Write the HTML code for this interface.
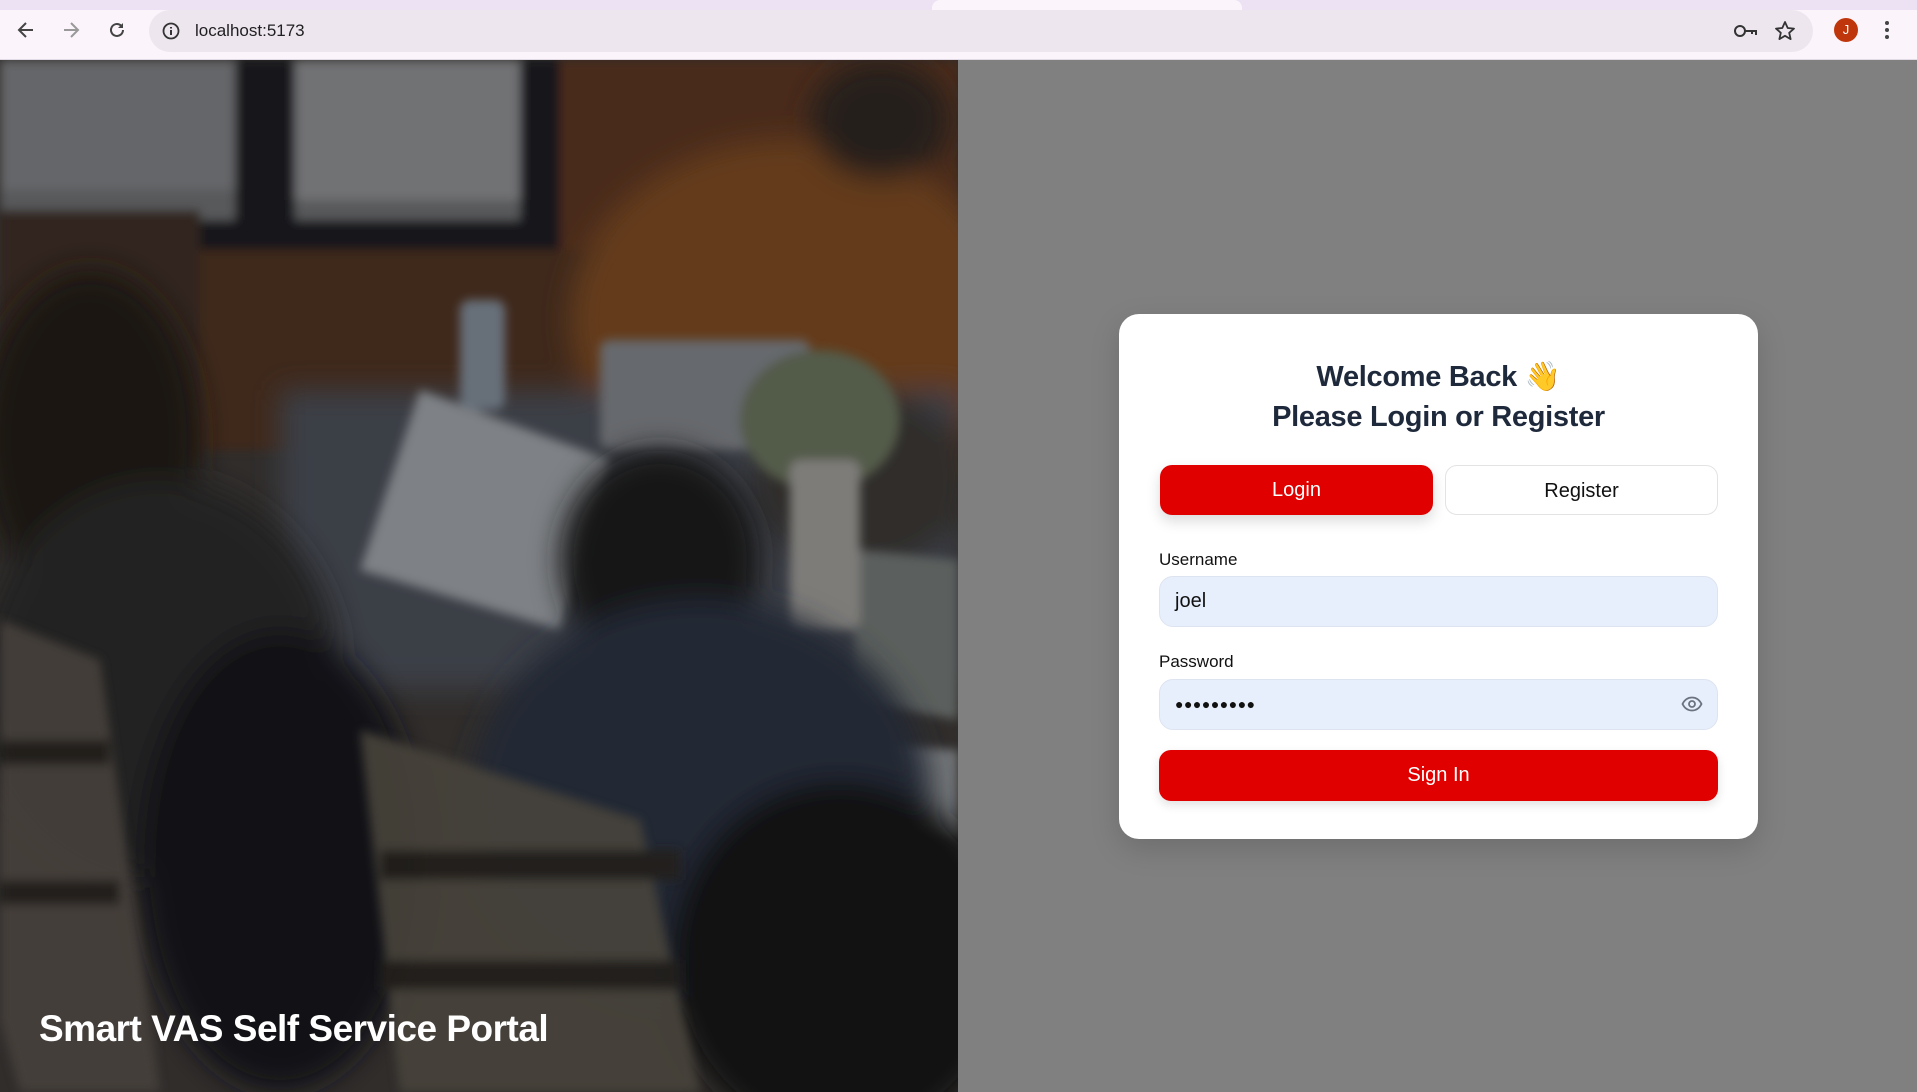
<!DOCTYPE html>
<html><head><meta charset="utf-8">
<style>
*{box-sizing:border-box;margin:0;padding:0}
html,body{width:1917px;height:1092px;overflow:hidden;background:#808080;font-family:"Liberation Sans","DejaVu Sans",sans-serif}
.top{position:absolute;left:0;top:0;width:1917px;height:60px;background:#fbf5fb;border-bottom:1px solid #e2dbe5}
.tabstrip{position:absolute;left:0;top:0;width:1917px;height:10px;background:#ece2f3}
.tabstrip .t{position:absolute;left:932px;top:0;width:310px;height:10px;background:#fbf5fb;border-radius:8px 8px 0 0}
.url{position:absolute;left:149px;top:10px;width:1664px;height:42px;background:#ede6ef;border-radius:21px}
.url .txt{position:absolute;left:46px;top:11px;font-size:17px;color:#1f1f1f}
.ic{position:absolute}
.left{position:absolute;left:0;top:60px;width:958px;height:1032px;overflow:hidden;background:#3a3634}
.left h1{position:absolute;left:39px;top:948px;color:#fff;font-size:37px;font-weight:bold;letter-spacing:-0.5px}
.ov{position:absolute;left:0;top:0;width:958px;height:1032px;background:rgba(0,0,0,.18)}
.card{position:absolute;left:1119px;top:314px;width:639px;height:525px;background:#fff;border-radius:20px;box-shadow:0 10px 30px rgba(0,0,0,.15)}
.title{position:absolute;left:0;width:639px;text-align:center;font-weight:bold;font-size:29px;color:#1e293b;letter-spacing:-0.3px}
.btn{position:absolute;height:50px;border-radius:12px;text-align:center;line-height:50px;font-size:20px}
.lbl{position:absolute;left:40px;font-size:17px;color:#111}
.inp{position:absolute;left:40px;width:559px;height:51px;background:#e8effc;border:1px solid #dde4f0;border-radius:14px;font-size:20px;color:#111;padding-left:15px;line-height:49px}
</style></head><body>
<div class="top">
 <div class="tabstrip"><div class="t"></div></div>
 <svg class="ic" style="left:16px;top:20px" width="20" height="20" viewBox="0 0 20 20"><path d="M17 10H4M10 3L3 10l7 7" fill="none" stroke="#444" stroke-width="2"/></svg>
 <svg class="ic" style="left:61px;top:20px" width="20" height="20" viewBox="0 0 20 20"><path d="M3 10h13M10 3l7 7-7 7" fill="none" stroke="#999" stroke-width="2"/></svg>
 <svg class="ic" style="left:107px;top:20px" width="20" height="20" viewBox="0 0 20 20"><path d="M16 10a6 6 0 1 1-2-4.5" fill="none" stroke="#444" stroke-width="2"/><path d="M16 3v5h-5" fill="#444"/></svg>
 <div class="url">
  <svg class="ic" style="left:12px;top:11px" width="20" height="20" viewBox="0 0 20 20"><circle cx="10" cy="10" r="7.5" fill="none" stroke="#333" stroke-width="1.8"/><path d="M10 9v5M10 6v1.5" stroke="#333" stroke-width="2"/></svg>
  <div class="txt">localhost:5173</div>
  <svg class="ic" style="left:1584px;top:11px" width="26" height="20" viewBox="0 0 26 20"><circle cx="7" cy="10" r="5" fill="none" stroke="#333" stroke-width="2"/><path d="M12 10h11v4M19 10v3" fill="none" stroke="#333" stroke-width="2"/></svg>
  <svg class="ic" style="left:1625px;top:10px" width="22" height="22" viewBox="0 0 22 22"><path d="M11 2l2.7 6 6.3.6-4.8 4.2 1.4 6.3L11 15.8 5.4 19.1l1.4-6.3L2 8.6 8.3 8z" fill="none" stroke="#333" stroke-width="1.8" stroke-linejoin="round"/></svg>
 </div>
 <div class="ic" style="left:1834px;top:18px;width:24px;height:24px;border-radius:50%;background:#c0360c;color:#fff;font-size:13px;text-align:center;line-height:24px">J</div>
 <svg class="ic" style="left:1884px;top:20px" width="6" height="20" viewBox="0 0 6 20"><circle cx="3" cy="3" r="2" fill="#444"/><circle cx="3" cy="10" r="2" fill="#444"/><circle cx="3" cy="17" r="2" fill="#444"/></svg>
</div>

<div class="left">
<svg width="958" height="1032" viewBox="0 0 958 1032">
<defs><filter id="b"><feGaussianBlur stdDeviation="14"/></filter><filter id="s"><feGaussianBlur stdDeviation="5"/></filter></defs>
<rect width="958" height="1032" fill="#3b3735"/>
<g filter="url(#s)">
<rect x="0" y="0" width="560" height="200" fill="#6c6d70"/>
<rect x="0" y="0" width="240" height="130" fill="#7c7d80"/>
<rect x="290" y="0" width="240" height="140" fill="#8a8b8e"/>
<rect x="235" y="0" width="60" height="180" fill="#1e1e20"/>
<rect x="520" y="0" width="40" height="190" fill="#1e1e20"/>
<rect x="200" y="160" width="370" height="30" fill="#1e1e20"/>
<rect x="560" y="0" width="400" height="420" fill="#5a3620"/>
<rect x="200" y="190" width="420" height="200" fill="#4d3223"/>
<rect x="0" y="150" width="200" height="250" fill="#3d2f28"/>
</g>
<g filter="url(#b)">
<ellipse cx="790" cy="260" rx="220" ry="180" fill="#7a4a24"/>
<ellipse cx="880" cy="60" rx="70" ry="60" fill="#2d2622"/>
<rect x="280" y="330" width="680" height="300" fill="#484e56"/>
<ellipse cx="860" cy="420" rx="110" ry="90" fill="#3b3836"/>
</g>
<g filter="url(#s)">
<polygon points="420,330 610,400 560,570 360,510" fill="#9a9ea3"/>
<rect x="600" y="280" width="210" height="110" fill="#7d8085" rx="10"/>
<rect x="460" y="240" width="45" height="110" fill="#7e8894" rx="10"/>
<polygon points="860,490 958,500 958,660 850,640" fill="#6f7472"/>
<polygon points="800,680 958,690 958,780 820,760" fill="#8b8f92"/>
<ellipse cx="820" cy="360" rx="80" ry="70" fill="#66705a"/>
<rect x="790" y="400" width="70" height="170" fill="#9a9894" rx="10"/>
</g>
<g filter="url(#b)">
<ellipse cx="90" cy="380" rx="110" ry="170" fill="#201a18"/>
<ellipse cx="160" cy="620" rx="180" ry="200" fill="#2c2a2b"/>
<ellipse cx="280" cy="800" rx="140" ry="230" fill="#16171a"/>
<ellipse cx="660" cy="500" rx="100" ry="110" fill="#1c1a1a"/>
<ellipse cx="700" cy="740" rx="230" ry="200" fill="#2b3240"/>
<ellipse cx="840" cy="900" rx="170" ry="180" fill="#151619"/>
</g>
<g filter="url(#s)" opacity=".9">
<polygon points="0,560 100,600 160,1032 20,1032 0,960" fill="#565048"/>
<polygon points="360,670 640,760 700,1032 400,1032" fill="#585248"/>
<rect x="380" y="790" width="300" height="30" fill="#2a2724"/>
<rect x="380" y="900" width="300" height="30" fill="#2a2724"/>
<rect x="0" y="680" width="110" height="25" fill="#2a2724"/>
<rect x="0" y="820" width="120" height="25" fill="#2a2724"/>
</g>
</svg>
<div class="ov"></div>
<h1>Smart VAS Self Service Portal</h1>
</div>

<div class="card">
 <div class="title" style="top:46px">Welcome Back 👋</div>
 <div class="title" style="top:87px">Please Login or Register</div>
 <div class="btn" style="left:41px;top:151px;width:273px;background:#e00000;color:#fff;box-shadow:0 6px 14px rgba(0,0,0,.15)">Login</div>
 <div class="btn" style="left:326px;top:151px;width:273px;background:#fff;color:#111;border:1px solid #e3e3e3">Register</div>
 <div class="lbl" style="top:236px">Username</div>
 <div class="inp" style="top:262px">joel</div>
 <div class="lbl" style="top:338px">Password</div>
 <div class="inp" style="top:365px;letter-spacing:0.5px;font-size:14px">●●●●●●●●●
  <svg style="position:absolute;right:14px;top:15px" width="22" height="18" viewBox="0 0 22 18"><path d="M1.5 9C4 4 7.5 2.5 11 2.5S18 4 20.5 9C18 14 14.5 15.5 11 15.5S4 14 1.5 9z" fill="none" stroke="#6b7280" stroke-width="1.8"/><circle cx="11" cy="9" r="3" fill="none" stroke="#6b7280" stroke-width="1.8"/></svg>
 </div>
 <div class="btn" style="left:40px;top:436px;width:559px;height:51px;line-height:51px;background:#e00000;color:#fff;box-shadow:0 4px 10px rgba(0,0,0,.12)">Sign In</div>
</div>
</body></html>
